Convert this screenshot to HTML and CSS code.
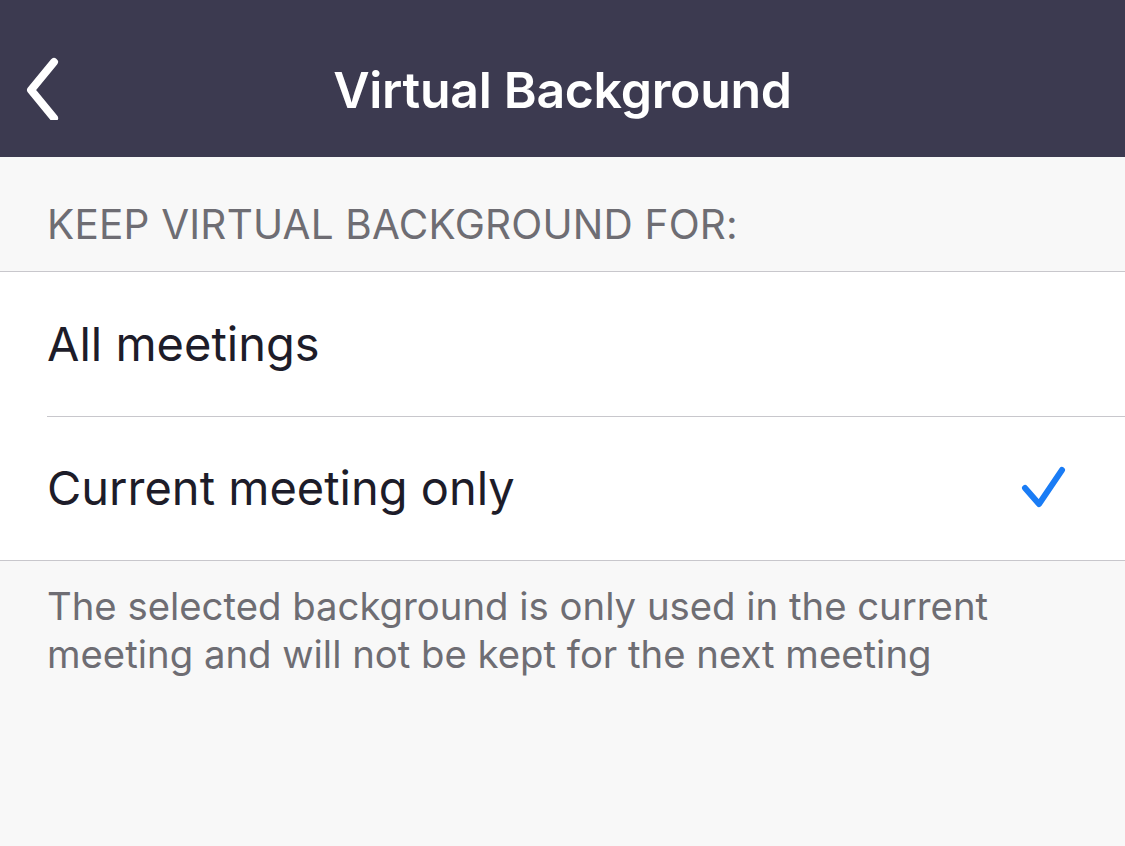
FILE: index.html
```html
<!DOCTYPE html>
<html>
<head>
<meta charset="utf-8">
<link rel="stylesheet" href="styles.css">
</head>
<body>
<header class="nav">
  <button class="back" aria-label="Back">
    <svg width="50" height="80" viewBox="0 0 50 80"><path d="M37 22 L14 50 L37 78" fill="none" stroke="#fff" stroke-width="8" stroke-linecap="round" stroke-linejoin="round"/></svg>
  </button>
  <h1 class="title">Virtual Background</h1>
</header>
<main class="content">
  <div class="section-title">KEEP VIRTUAL BACKGROUND FOR:</div>
  <ul class="list">
    <li class="row"><span class="label">All meetings</span></li>
    <li class="row"><span class="label">Current meeting only</span>
      <svg class="check" width="60" height="60" viewBox="0 0 60 60"><path d="M8 26 L22 42 L45 8" fill="none" stroke="#1a7cf5" stroke-width="6" stroke-linecap="round" stroke-linejoin="round"/></svg>
    </li>
  </ul>
  <p class="footer">The selected background is only used in the current meeting and will not be kept for the next meeting</p>
</main>
</body>
</html>
```
FILE: styles.css
```css
* { box-sizing: border-box; }
html, body { margin: 0; padding: 0; }
body {
  width: 1125px;
  height: 846px;
  background: #f8f8f8;
  font-family: Inter, "Noto Sans", sans-serif;
  overflow: hidden;
}
.nav {
  height: 157px;
  background: #3c3a50;
  position: relative;
  display: flex;
  align-items: center;
  justify-content: center;
}
.back {
  position: absolute;
  left: 17px;
  top: 40px;
  background: none;
  border: 0;
  padding: 0;
  width: 50px;
  height: 80px;
  display: block;
}
.back svg { display: block; }
.title {
  margin: 0;
  color: #fff;
  font-size: 50px;
  font-weight: 600;
  letter-spacing: -0.3px;
  padding-top: 22px;
}
.section-title {
  height: 115px;
  padding: 43px 0 0 47px;
  color: #6e6d73;
  font-size: 40.5px;
  letter-spacing: 0.2px;
  border-bottom: 1px solid #c8c7cc;
}
.list {
  list-style: none;
  margin: 0;
  padding: 0 0 0 47px;
  background: #fff;
  border-bottom: 1px solid #c8c7cc;
}
.row {
  height: 144px;
  display: flex;
  align-items: center;
  justify-content: space-between;
  padding-right: 48px;
  color: #1d1c29;
  font-size: 47px;
}
.row + .row { border-top: 1px solid #c8c7cc; }
.label { padding-bottom: 2px; }
.check { display: block; margin-top: 6px; }
.footer {
  margin: 0;
  padding: 21px 40px 0 47px;
  color: #6e6d73;
  font-size: 38.3px;
  line-height: 48px;
}
```
